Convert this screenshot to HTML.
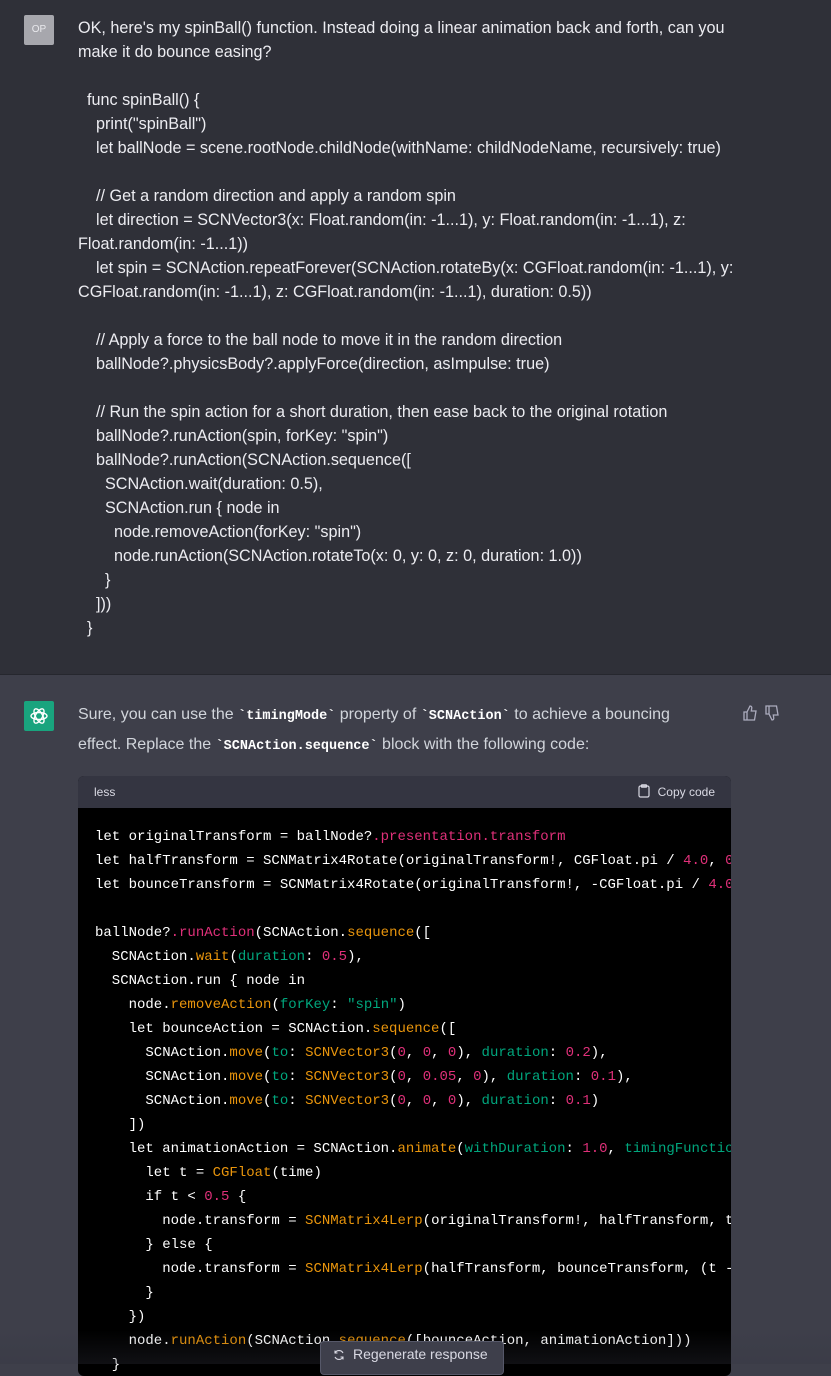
<!DOCTYPE html>
<html><head><meta charset="utf-8"><style>
*{margin:0;padding:0;box-sizing:border-box}
body{width:831px;height:1364px;overflow:hidden;background:#3e3f4a;font-family:"Liberation Sans",sans-serif;color:#ececf1;position:relative}
.user{position:absolute;left:0;top:0;width:831px;height:675px;background:#2f3038;border-bottom:1px solid #26272e}
.av{position:absolute;left:24px;top:15px;width:30px;height:30px;background:#a7a7ad;color:#e9e9ed;font-size:10px;text-align:center;line-height:30px;border-radius:2px}
.ut{position:absolute;left:78px;top:16px;font-size:16.2px;line-height:24px;white-space:pre;color:#ececf1}
.gpt{position:absolute;left:24px;top:701px;width:30px;height:30px;background:#19a47e;border-radius:2px}
.at{position:absolute;left:78px;top:701px;font-size:16px;line-height:28px;color:#d1d5db;white-space:pre}
.at code{font-family:"Liberation Mono",monospace;font-weight:bold;font-size:13.5px;color:#fff}
.thumbs{position:absolute;left:742px;top:704px;color:#acacbe}
.cb{position:absolute;left:78px;top:776px;width:653px;height:600px;border-radius:6px;overflow:hidden;background:#000}
.ch{height:32px;background:#343541;font-size:12px;color:#d9d9e3;padding:0 16px;line-height:32px;position:relative}
.copy{position:absolute;right:16px;top:0}
.code{padding:17px 0 0 17px;font-family:"Liberation Mono",monospace;font-size:14px;line-height:24px;white-space:pre;color:#fff}
.p{color:#df3079}.o{color:#e9950c}.g{color:#00a67d}
.fade{position:absolute;left:0;top:1330px;width:831px;height:34px;background:linear-gradient(rgba(62,63,74,0),rgba(52,53,65,0.3))}
.regen{position:absolute;left:320px;top:1341px;width:184px;height:34px;background:#3e3f4b;border:1px solid #565869;border-radius:4px;font-size:14px;color:#d9d9e3;padding:4px 0 0 32px}
.regen svg{position:absolute;left:12px;top:7px}
</style></head><body>
<div class="user">
<div class="av">OP</div>
<div class="ut">OK, here's my spinBall() function. Instead doing a linear animation back and forth, can you
make it do bounce easing?

  func spinBall() {
    print("spinBall")
    let ballNode = scene.rootNode.childNode(withName: childNodeName, recursively: true)

    // Get a random direction and apply a random spin
    let direction = SCNVector3(x: Float.random(in: -1...1), y: Float.random(in: -1...1), z:
Float.random(in: -1...1))
    let spin = SCNAction.repeatForever(SCNAction.rotateBy(x: CGFloat.random(in: -1...1), y:
CGFloat.random(in: -1...1), z: CGFloat.random(in: -1...1), duration: 0.5))

    // Apply a force to the ball node to move it in the random direction
    ballNode?.physicsBody?.applyForce(direction, asImpulse: true)

    // Run the spin action for a short duration, then ease back to the original rotation
    ballNode?.runAction(spin, forKey: "spin")
    ballNode?.runAction(SCNAction.sequence([
      SCNAction.wait(duration: 0.5),
      SCNAction.run { node in
        node.removeAction(forKey: "spin")
        node.runAction(SCNAction.rotateTo(x: 0, y: 0, z: 0, duration: 1.0))
      }
    ]))
  }</div>
</div>
<div class="gpt"><svg width="30" height="30" viewBox="0 0 30 30"><g fill="none" stroke="#fff" stroke-width="1.4"><ellipse cx="15" cy="15" rx="8" ry="3.5"/><ellipse cx="15" cy="15" rx="8" ry="3.5" transform="rotate(60 15 15)"/><ellipse cx="15" cy="15" rx="8" ry="3.5" transform="rotate(120 15 15)"/></g></svg></div>
<div class="at">Sure, you can use the <code>`timingMode`</code> property of <code>`SCNAction`</code> to achieve a bouncing
effect. Replace the <code>`SCNAction.sequence`</code> block with the following code:</div>
<div class="thumbs"><svg width="40" height="18" viewBox="0 0 40 18" fill="none" stroke="#acacbe" stroke-width="1.3"><path d="M2 8h3v8H2zM5 8l3-6c1.5 0 2 1 1.7 2.5L9.3 7H14l-1.5 9H5"/><path d="M24 10h3V2h-3zM27 10l3 6c1.5 0 2-1 1.7-2.5L31.3 11H36l-1.5-9H27"/></svg></div>
<div class="cb">
<div class="ch">less<span class="copy"><svg width="12" height="14" viewBox="0 0 12 14" style="vertical-align:-2px;margin-right:8px" fill="none" stroke="#d9d9e3" stroke-width="1.2"><rect x="1" y="2" width="10" height="11" rx="1.5"/><rect x="3.5" y="0.8" width="5" height="2.4" rx="0.5"/></svg>Copy code</span></div>
<div class="code">let originalTransform = ballNode?<span class="p">.presentation.transform</span>
let halfTransform = SCNMatrix4Rotate(originalTransform!, CGFloat.pi / <span class="p">4.0</span>, <span class="p">0</span>
let bounceTransform = SCNMatrix4Rotate(originalTransform!, -CGFloat.pi / <span class="p">4.0</span>

ballNode?<span class="p">.runAction</span>(SCNAction.<span class="o">sequence</span>([
  SCNAction.<span class="o">wait</span>(<span class="g">duration</span>: <span class="p">0.5</span>),
  SCNAction.run { node in
    node.<span class="o">removeAction</span>(<span class="g">forKey</span>: <span class="g">"spin"</span>)
    let bounceAction = SCNAction.<span class="o">sequence</span>([
      SCNAction.<span class="o">move</span>(<span class="g">to</span>: <span class="o">SCNVector3</span>(<span class="p">0</span>, <span class="p">0</span>, <span class="p">0</span>), <span class="g">duration</span>: <span class="p">0.2</span>),
      SCNAction.<span class="o">move</span>(<span class="g">to</span>: <span class="o">SCNVector3</span>(<span class="p">0</span>, <span class="p">0.05</span>, <span class="p">0</span>), <span class="g">duration</span>: <span class="p">0.1</span>),
      SCNAction.<span class="o">move</span>(<span class="g">to</span>: <span class="o">SCNVector3</span>(<span class="p">0</span>, <span class="p">0</span>, <span class="p">0</span>), <span class="g">duration</span>: <span class="p">0.1</span>)
    ])
    let animationAction = SCNAction.<span class="o">animate</span>(<span class="g">withDuration</span>: <span class="p">1.0</span>, <span class="g">timingFunctio</span>
      let t = <span class="o">CGFloat</span>(time)
      if t &lt; <span class="p">0.5</span> {
        node.transform = <span class="o">SCNMatrix4Lerp</span>(originalTransform!, halfTransform, t
      } else {
        node.transform = <span class="o">SCNMatrix4Lerp</span>(halfTransform, bounceTransform, (t -
      }
    })
    node.<span class="o">runAction</span>(SCNAction.<span class="o">sequence</span>([bounceAction, animationAction]))
  }</div>
</div>
<div class="fade"></div>
<div class="regen"><svg width="12" height="12" viewBox="0 0 12 12" fill="none" stroke="#d9d9e3" stroke-width="1.1"><path d="M10 4A4.5 4.5 0 0 0 2 4M2 1.5V4h2.5M2 8a4.5 4.5 0 0 0 8 0M10 10.5V8H7.5"/></svg>Regenerate response</div>
</body></html>
